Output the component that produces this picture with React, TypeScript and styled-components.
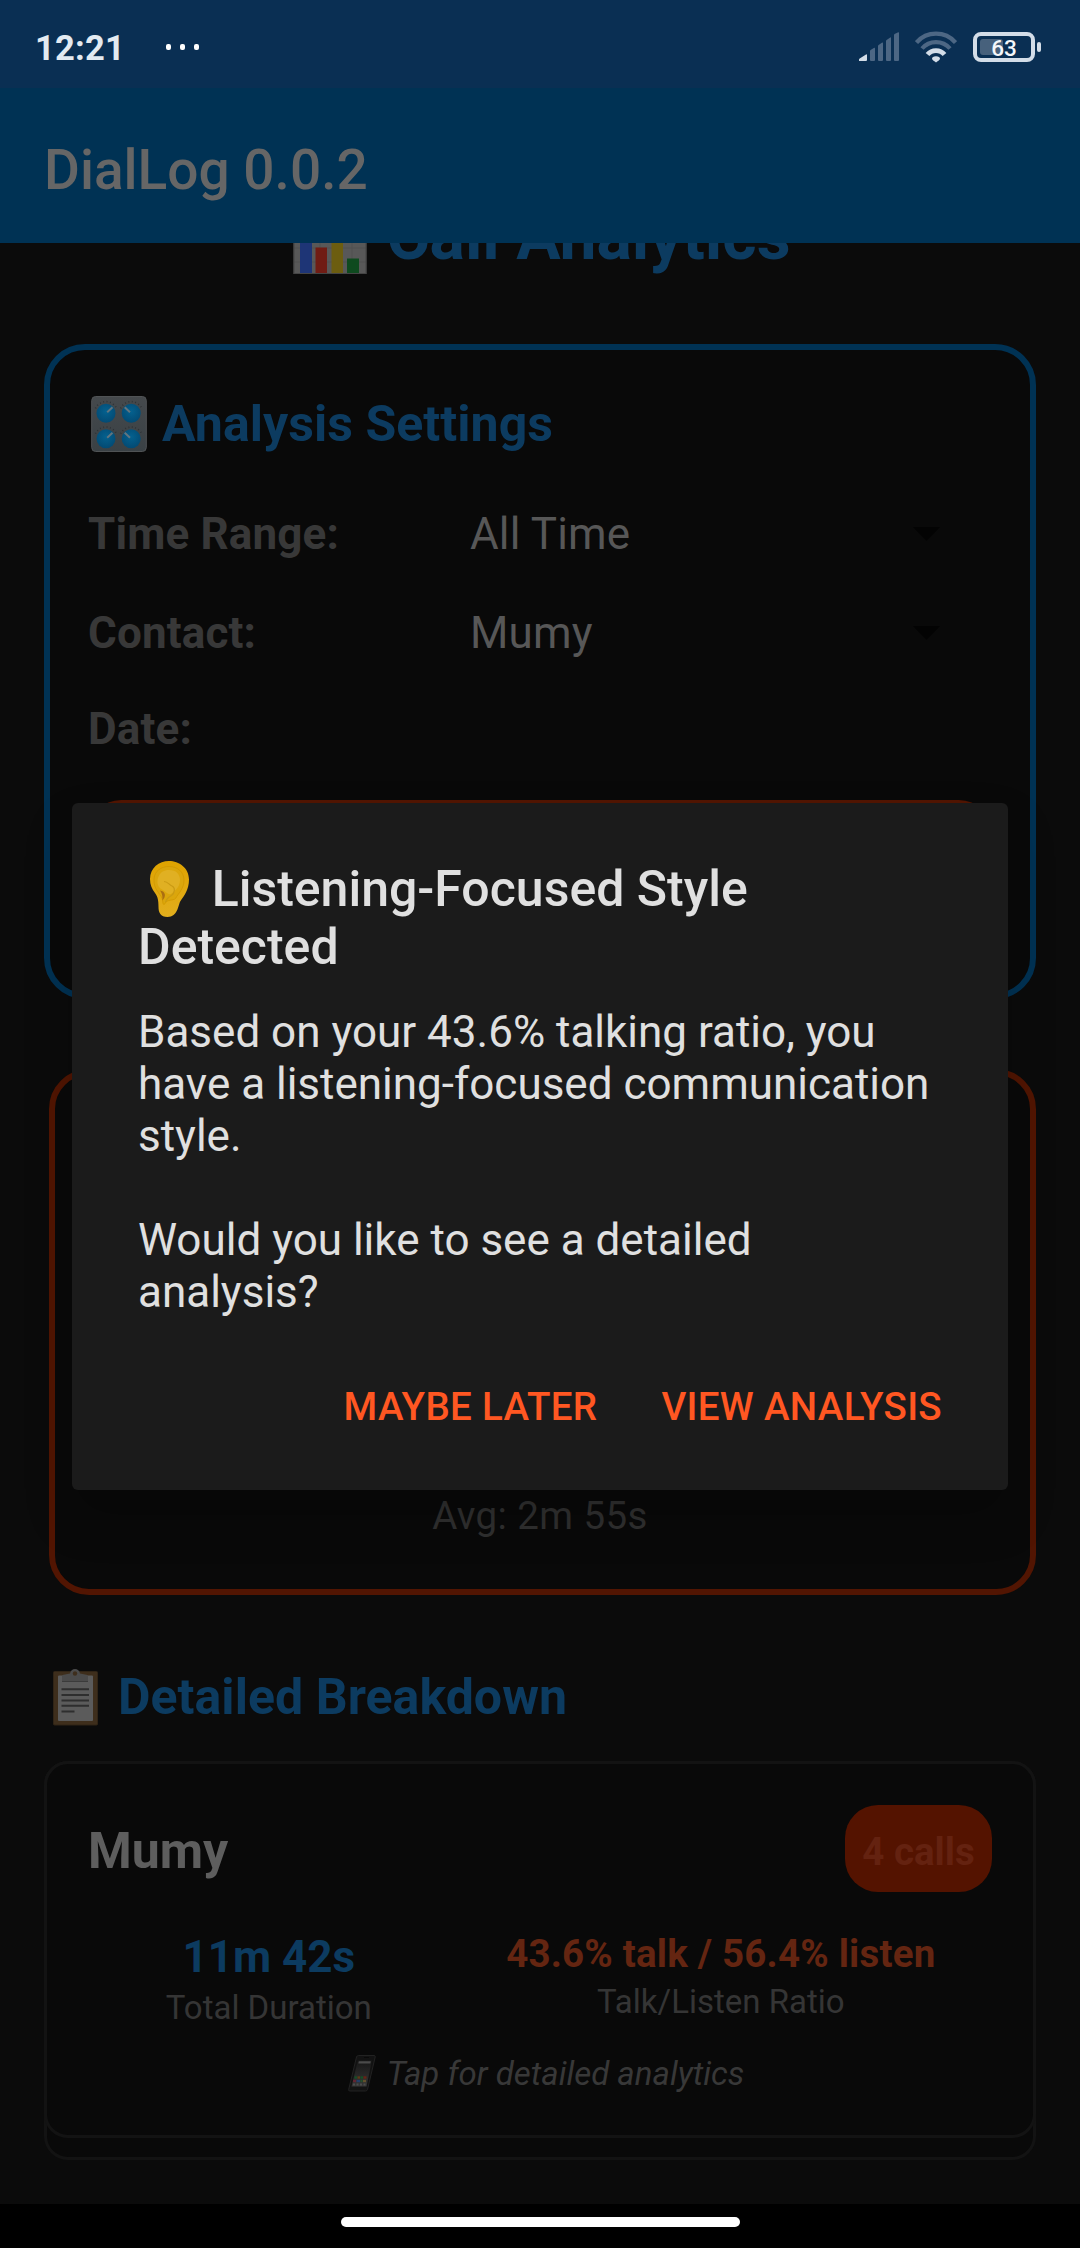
import React from "react";
import styled, { createGlobalStyle } from "styled-components";

const GlobalStyle = createGlobalStyle`
  *, *::before, *::after { box-sizing: border-box; }
  body { margin: 0; background: #000; font-family: Roboto, "Noto Sans", sans-serif; }
`;

const Screen = styled.div`
  position: relative;
  display: flex;
  flex-direction: column;
  width: 1080px;
  height: 2248px;
  overflow: hidden;
  background: #0b0b0b;
`;

/* ---------- status bar ---------- */

const StatusBar = styled.header`
  display: flex;
  flex: none;
  align-items: center;
  justify-content: space-between;
  height: 88px;
  padding: 6px 39px 0 35px;
  background: #0a2f53;
`;

const StatusGroup = styled.div<{ $gap: number }>`
  display: flex;
  align-items: center;
  gap: ${(p) => p.$gap}px;
`;

const Clock = styled.span`
  padding-top: 2px;
  font-size: 34.5px;
  font-weight: 700;
  line-height: 40px;
  letter-spacing: 0.2px;
  color: #e3eaf1;
`;

const Dots = styled.div`
  display: flex;
  gap: 9px;
`;

const Dot = styled.i`
  width: 5px;
  height: 6px;
  border-radius: 2px;
  background: #fff;
`;

const BatteryWrap = styled.div`
  display: flex;
  align-items: center;
  gap: 2px;
`;

const BatteryBody = styled.div`
  position: relative;
  display: flex;
  align-items: center;
  justify-content: center;
  width: 62px;
  height: 30px;
  border: 4px solid #d3dde8;
  border-radius: 8px;
`;

const BatteryFill = styled.i`
  position: absolute;
  left: 3px;
  top: 3px;
  width: 23px;
  height: 16px;
  border-radius: 3px;
  background: #47617c;
`;

const BatteryText = styled.span`
  position: relative;
  padding-top: 2px;
  font-size: 22.5px;
  font-weight: 500;
  line-height: 22px;
  color: #f4f7fa;
`;

const BatteryNub = styled.i`
  width: 4px;
  height: 10px;
  border-radius: 2px;
  background: #d3dde8;
`;

/* ---------- app bar and page ---------- */

const AppBar = styled.div`
  display: flex;
  flex: none;
  align-items: center;
  height: 155px;
  padding: 8px 44px 0;
  background: #003254;
`;

const AppTitle = styled.h1`
  margin: 0;
  font-size: 55px;
  font-weight: 500;
  line-height: 64px;
  color: #666;
`;

const Page = styled.main`
  display: flex;
  flex: 1;
  flex-direction: column;
  min-height: 0;
  overflow: hidden;
`;

const PageHeading = styled.h2`
  display: flex;
  flex: none;
  align-items: center;
  justify-content: center;
  gap: 15px;
  margin: -45px 0 0;
  font-size: 66px;
  font-weight: 700;
  line-height: 78px;
  color: #0c3b60;
`;

const SectionHeading = styled.h3`
  display: flex;
  flex: none;
  align-items: center;
  gap: 12px;
  margin: 0;
  font-size: 50px;
  font-weight: 700;
  line-height: 58px;
  letter-spacing: 0.05px;
  color: #0c3b60;
`;

const SettingsCard = styled.section`
  display: flex;
  flex: none;
  flex-direction: column;
  height: 655px;
  margin: 68px 44px 0;
  padding: 45px 38px 0;
  border: 6px solid #003254;
  border-radius: 41px;
  background: #090909;
`;

const SettingList = styled.div`
  display: flex;
  flex-direction: column;
  margin-top: 32px;
`;

const SettingRow = styled.div<{ $height: number }>`
  display: flex;
  align-items: center;
  height: ${(p) => p.$height}px;
  padding-right: 52px;
  font-size: 44px;
  line-height: 52px;
  letter-spacing: 0.15px;
`;

const SettingLabel = styled.span`
  width: 382px;
  font-weight: 700;
  color: #383838;
`;

const SettingValue = styled.span`
  flex: 1;
  color: #575757;
`;

const ApplyButton = styled.div`
  height: 132px;
  margin-top: 25px;
  border-radius: 33px;
  background: #521502;
`;

const SummaryCard = styled.section`
  display: flex;
  flex: none;
  flex-direction: column;
  align-items: center;
  justify-content: flex-end;
  height: 526px;
  margin: 70px 44px 0 49px;
  padding: 0 5px 50px 0;
  border: 6px solid #521502;
  border-radius: 40px;
  background: #090909;
`;

const Average = styled.span`
  font-size: 38.5px;
  line-height: 46px;
  letter-spacing: 0.4px;
  color: #303030;
`;

const BreakdownHeader = styled.div`
  flex: none;
  margin: 73px 44px 35px;
`;

const ListFrame = styled.section`
  flex: none;
  height: 399px;
  margin: 0 44px;
  border: 3px solid #131313;
  border-radius: 24px;
  background: #090909;
`;

const ContactCard = styled.article`
  display: flex;
  flex-direction: column;
  height: 377px;
  margin: -3px;
  padding: 41px 41px 0;
  border: 3px solid #131313;
  border-radius: 24px;
  background: #090909;
`;

const ContactHeader = styled.div`
  display: flex;
  align-items: center;
  justify-content: space-between;
  height: 87px;
`;

const ContactName = styled.span`
  padding-top: 5px;
  font-size: 50px;
  font-weight: 700;
  line-height: 58px;
  color: #5e5e5e;
`;

const CallBadge = styled.span`
  display: flex;
  align-items: center;
  justify-content: center;
  width: 147px;
  height: 87px;
  padding-top: 5px;
  border-radius: 33px;
  background: #541300;
  font-size: 38.5px;
  font-weight: 700;
  line-height: 45px;
  color: #642210;
`;

const Stats = styled.div`
  display: flex;
  margin-top: 39px;
  height: 96px;
`;

const Stat = styled.div<{ $grow: number }>`
  display: flex;
  flex: ${(p) => p.$grow} 1 0;
  flex-direction: column;
  align-items: center;
  gap: ${(p) => (p.$grow === 2 ? 4 : 6)}px;
`;

const StatValue = styled.span<{ $accent?: boolean }>`
  font-size: ${(p) => (p.$accent ? 38.5 : 44)}px;
  font-weight: 700;
  line-height: ${(p) => (p.$accent ? 45 : 53)}px;
  letter-spacing: ${(p) => (p.$accent ? 0.2 : 0)}px;
  white-space: nowrap;
  color: ${(p) => (p.$accent ? "#642511" : "#0c3b60")};
`;

const StatLabel = styled.span`
  font-size: 33px;
  line-height: 39px;
  color: #353535;
`;

const TapHint = styled.div`
  display: flex;
  align-items: center;
  justify-content: center;
  gap: 8px;
  margin-top: 27px;
  padding-left: 2px;
  font-size: 33px;
  font-style: italic;
  line-height: 39px;
  color: #383838;
`;

const NavBar = styled.footer`
  display: flex;
  flex: none;
  justify-content: center;
  height: 44px;
  padding-top: 13px;
  background: #000;
`;

const HomePill = styled.div`
  width: 399px;
  height: 10px;
  border-radius: 5px;
  background: #fff;
`;

/* ---------- dialog ---------- */

const Overlay = styled.div`
  position: absolute;
  inset: 0;
  display: flex;
  align-items: flex-start;
  justify-content: center;
  padding-top: 803px;
`;

const Dialog = styled.div`
  display: flex;
  flex-direction: column;
  width: 936px;
  height: 687px;
  padding: 57px 66px 0;
  border-radius: 6px;
  background: #1b1b1b;
  box-shadow: 0 26px 48px rgba(0, 0, 0, 0.22);
  color: #e0e0e0;
`;

const DialogTitle = styled.h2`
  margin: 0;
  font-size: 50px;
  font-weight: 500;
  line-height: 58px;
`;

const DialogText = styled.p`
  margin: 30px 0 0;
  font-size: 44px;
  line-height: 52px;
  white-space: pre-line;
`;

const DialogActions = styled.div`
  display: flex;
  justify-content: flex-end;
  gap: 64px;
  margin-top: 66px;
`;

const DialogButton = styled.button`
  padding: 0;
  border: 0;
  background: none;
  font: 500 38.5px/46px Roboto, sans-serif;
  letter-spacing: 0.32px;
  color: #ff5722;
`;

/* ---------- drawings ---------- */

const SignalIcon = () => (
  <svg width="40" height="30" viewBox="0 0 40 30">
    <path d="M0 29V27.6Q0 27 .7 26.6L7 22.4Q8 22 8 23V28Q8 29 7 29Z" fill="#d3dde8" />
    <g fill="#4d6784">
      <path d="M11 28V19Q11 18.4 11.6 18L15.2 15.8Q16 15.6 16 16.4V28Q16 29 15 29H12Q11 29 11 28Z" />
      <path d="M19 28V14Q19 13.4 19.6 13L23.2 10.6Q24 10.4 24 11.2V28Q24 29 23 29H20Q19 29 19 28Z" />
      <path d="M27 28V9Q27 8.4 27.6 8L31.2 5.4Q32 5.2 32 6V28Q32 29 31 29H28Q27 29 27 28Z" />
      <path d="M35 28V3Q35 2.4 35.6 2L39.2 .3Q40 .1 40 .8V28Q40 29 39 29H36Q35 29 35 28Z" />
    </g>
  </svg>
);

const WifiIcon = () => (
  <svg width="42" height="32" viewBox="0 0 42 32" fill="none">
    <g stroke="#4d6784" strokeWidth="4.2">
      <path d="M1.5 11.5A26 26 0 0 1 40.5 11.5" />
      <path d="M7 17.5A18.5 18.5 0 0 1 35 17.5" />
    </g>
    <path d="M12.5 23.6A11 11 0 0 1 29.5 23.6" stroke="#d3dde8" strokeWidth="4.8" />
    <path d="M17 28Q17 25.2 21 25.2T25 28Q24.600 29 21 31.500Q17.400 29 17 28Z" fill="#d3dde8" />
  </svg>
);

const ChartEmoji = () => (
  <svg width="82" height="74" viewBox="0 0 82 74">
    <rect x="4.500" width="73" height="74" fill="#585858" />
    <path d="M5 12H77M5 24H77M5 36H77M5 48H77M5 62H77M16 0V74M31 0V74M47 0V74M63 0V74" stroke="#505050" strokeWidth="1" />
    <rect x="11" y="14" width="12" height="59" fill="#1e3576" />
    <rect x="26.500" y="47.500" width="11.500" height="25.500" fill="#701c14" />
    <rect x="42.500" y="30" width="11.500" height="43" fill="#6c5d10" />
    <rect x="58" y="58.500" width="12" height="14.500" fill="#0e4a1f" />
    <rect x="5" y=".5" width="72" height="73" fill="none" stroke="#454545" />
  </svg>
);

const knobs = [
  { x: 18, y: 17.3, dir: 1 },
  { x: 43.2, y: 17.3, dir: -1 },
  { x: 18, y: 42.7, dir: 1 },
  { x: 43.2, y: 42.7, dir: -1 },
];

const KnobsEmoji = () => (
  <svg width="62" height="56" viewBox="0 0 62 56">
    <defs>
      <linearGradient id="panel" x1="0" y1="0" x2="0" y2="1">
        <stop offset="0" stopColor="#45494c" />
        <stop offset="1" stopColor="#3a4145" />
      </linearGradient>
      <radialGradient id="knob" cx=".5" cy=".4" r=".6">
        <stop offset="0" stopColor="#04618f" />
        <stop offset="1" stopColor="#034a73" />
      </radialGradient>
    </defs>
    <rect x="3.700" y=".5" width="54.600" height="55" rx="4" fill="url(#panel)" stroke="#505355" />
    {knobs.map((k) => (
      <g key={`${k.x}-${k.y}`} transform={`translate(${k.x} ${k.y})`}>
        <path d="M-10.500 -5A11.600 11.600 0 0 1 10.500 -5" fill="none" stroke="#2c3033" strokeWidth="1.600" strokeDasharray=".8 2.600" />
        <circle r="9.500" fill="url(#knob)" />
        <path d={`M${1.2 * k.dir} -1L${6.5 * k.dir} -6`} stroke="#62757f" strokeWidth="2" />
      </g>
    ))}
  </svg>
);

const EarSvg = styled.svg`
  width: 61.4px;
  height: 56px;
  margin-right: 12.3px;
  vertical-align: -11px;
`;

const EarEmoji = () => (
  <EarSvg viewBox="0 0 61.4 56">
    <defs>
      <linearGradient id="skin" x1="0" y1="0" x2="0" y2="1">
        <stop offset="0" stopColor="#dfa300" />
        <stop offset="1" stopColor="#e2ae1d" />
      </linearGradient>
    </defs>
    <path d="M31 0C41 0 51 7 51 18.500C51 29 46 35 42.500 40C40 44 40 56 29.500 56C22.500 56 20.500 51.500 20.500 46C20.500 40 20 36 17 32C14 28 12 24 12 18C12 7 21 0 31 0Z" fill="url(#skin)" />
    <path d="M31 5.500C39.500 5.500 46 11 46 19C46 28 40.500 32 37.500 37.500C35 40 29 38 27 42.500C26 44.500 24.800 43 24.800 41C24.800 36 22 35 20 31C16.500 26 16 23 16 18C16.500 10 23 5.500 31 5.500Z" fill="#dba60c" stroke="#d09800" strokeWidth=".8" />
    <path d="M31 9C38 9 42 13 42 19C42 26 37 30 33 33C30 34 28 31 25 29C20 27 18.500 22 20 17C22 11 26 9 31 9Z" fill="#e0b023" />
    <path d="M26 20.500C30 20.500 31 24 34 25C37.500 26.500 37 32 33.500 34.500C30 36.500 28.500 38 27.500 41" fill="none" stroke="#c99a14" strokeWidth="1.200" />
    <path d="M22 29.500C27.500 30.500 28.500 35 24.500 39.500C24.500 35 24.500 33 22 29.500Z" fill="#aa6e12" />
  </EarSvg>
);

const ClipboardEmoji = () => (
  <svg width="62" height="57" viewBox="0 0 62 57">
    <rect x="9.500" y="2.500" width="44" height="53.500" rx="1" fill="#3e2e1c" stroke="#302416" />
    <rect x="14" y="6.500" width="35" height="45.500" rx="1" fill="#5b5b5b" />
    <path d="M18 13V7.500Q18 5.500 21 5.500L26 4.500Q27 0 31 0T36 4.500L41 5.500Q44 5.500 44 7.500V13Z" fill="#4b4b4b" />
    <circle cx="31" cy="4.500" r="2.200" fill="#3e2e1c" />
    <path d="M18 12.500H44" stroke="#3b3b3b" />
    <path d="M17.500 20.300H45M17.500 26H45M17.500 31.400H45M17.500 36.700H45M17.500 42.400H30.500" stroke="#2e2e2e" strokeWidth="2" />
  </svg>
);

const PhoneEmoji = () => (
  <svg width="41" height="37" viewBox="0 0 41 37">
    <defs>
      <linearGradient id="glass" x1="0" y1="0" x2="0" y2="1">
        <stop offset="0" stopColor="#161616" />
        <stop offset="1" stopColor="#363636" />
      </linearGradient>
    </defs>
    <path d="M20.500 .5H36Q37.500 .5 37.200 2L29.500 34.500Q29 36 27.500 36H12Q10.200 36 10.700 34.500L18.500 2Q19 .5 20.500 .5Z" fill="#121212" stroke="#222" />
    <path d="M20 5H34L28.500 31.500H13.500Z" fill="url(#glass)" />
    <path d="M20.800 6.200H32.800L32.400 8.400H20.300Z" fill="#4b4b4b" />
    <path d="M26 2.500H31" stroke="#090909" />
    <g strokeWidth="2.400">
      <path d="M16.500 22.500H19" stroke="#164f28" />
      <path d="M19.500 22.500H22" stroke="#5d3a15" />
      <path d="M22.500 22.500H25" stroke="#165024" />
      <path d="M25.500 22.500H28.500" stroke="#672416" />
      <path d="M15 26H18" stroke="#612531" />
      <path d="M18.500 26H22" stroke="#243e69" />
      <path d="M22.500 26H24.500" stroke="#23522d" />
      <path d="M25 26H28" stroke="#62502c" />
    </g>
    <path d="M15 29.500H28" stroke="#4c4c4c" strokeWidth="2" strokeDasharray="2 1.500" />
  </svg>
);

const CaretIcon = () => (
  <svg width="27" height="14" viewBox="0 0 27 14">
    <path d="M0 0H27L13.500 13.700Z" fill="#030303" />
  </svg>
);

/* ---------- screen ---------- */

const settings = [
  { label: "Time Range:", value: "All Time", height: 98 },
  { label: "Contact:", value: "Mumy", height: 100 },
  { label: "Date:", value: "", height: 92 },
];

export default function App() {
  return (
    <>
      <GlobalStyle />
      <Screen>
        <StatusBar>
          <StatusGroup $gap={41}>
            <Clock>12:21</Clock>
            <Dots>
              <Dot />
              <Dot />
              <Dot />
            </Dots>
          </StatusGroup>
          <StatusGroup $gap={16}>
            <SignalIcon />
            <WifiIcon />
            <BatteryWrap>
              <BatteryBody>
                <BatteryFill />
                <BatteryText>63</BatteryText>
              </BatteryBody>
              <BatteryNub />
            </BatteryWrap>
          </StatusGroup>
        </StatusBar>

        <AppBar>
          <AppTitle>DialLog 0.0.2</AppTitle>
        </AppBar>

        <Page>
          <PageHeading>
            <ChartEmoji />
            Call Analytics
          </PageHeading>

          <SettingsCard>
            <SectionHeading>
              <KnobsEmoji />
              Analysis Settings
            </SectionHeading>
            <SettingList>
              {settings.map((s) => (
                <SettingRow key={s.label} $height={s.height}>
                  <SettingLabel>{s.label}</SettingLabel>
                  {s.value && (
                    <>
                      <SettingValue>{s.value}</SettingValue>
                      <CaretIcon />
                    </>
                  )}
                </SettingRow>
              ))}
            </SettingList>
            <ApplyButton />
          </SettingsCard>

          <SummaryCard>
            <Average>Avg: 2m 55s</Average>
          </SummaryCard>

          <BreakdownHeader>
            <SectionHeading>
              <ClipboardEmoji />
              Detailed Breakdown
            </SectionHeading>
          </BreakdownHeader>

          <ListFrame>
            <ContactCard>
              <ContactHeader>
                <ContactName>Mumy</ContactName>
                <CallBadge>4 calls</CallBadge>
              </ContactHeader>
              <Stats>
                <Stat $grow={2}>
                  <StatValue>11m 42s</StatValue>
                  <StatLabel>Total Duration</StatLabel>
                </Stat>
                <Stat $grow={3}>
                  <StatValue $accent>43.6% talk / 56.4% listen</StatValue>
                  <StatLabel>Talk/Listen Ratio</StatLabel>
                </Stat>
              </Stats>
              <TapHint>
                <PhoneEmoji />
                Tap for detailed analytics
              </TapHint>
            </ContactCard>
          </ListFrame>
        </Page>

        <NavBar>
          <HomePill />
        </NavBar>

        <Overlay>
          <Dialog role="dialog">
            <DialogTitle>
              <EarEmoji />
              Listening-Focused Style Detected
            </DialogTitle>
            <DialogText>
              {"Based on your 43.6% talking ratio, you have a listening-focused communication style.\n\nWould you like to see a detailed analysis?"}
            </DialogText>
            <DialogActions>
              <DialogButton>MAYBE LATER</DialogButton>
              <DialogButton>VIEW ANALYSIS</DialogButton>
            </DialogActions>
          </Dialog>
        </Overlay>
      </Screen>
    </>
  );
}
